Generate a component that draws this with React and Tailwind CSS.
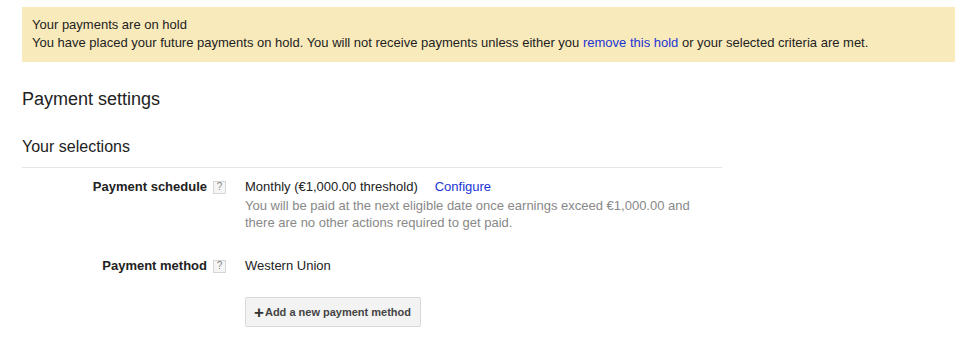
export default function App() {
  const help = (
    <span className="ml-[6px] inline-flex h-[13px] w-[13px] items-center justify-center border border-[#d6d6d6] bg-[#f5f5f5] text-[10px] leading-none text-[#888]">
      ?
    </span>
  );

  return (
    <div className="min-h-screen bg-white pt-[7px] font-['Liberation_Sans',Arial,sans-serif] text-[13px] text-[#222]">
      <div className="ml-[22px] bg-[#f9eabb] px-[10px] pb-[10px] pt-[9px] leading-[18px]">
        <div>Your payments are on hold</div>
        <div>
          You have placed your future payments on hold. You will not receive payments unless either you{' '}
          <a className="text-[#1a35d6]">remove this hold</a> or your selected criteria are met.
        </div>
      </div>

      <div className="ml-[22px] w-[700px]">
        <h1 className="mt-[26px] text-[18px] leading-[22px] text-[#222]">Payment settings</h1>
        <h2 className="mt-[27px] text-[16px] leading-[20px] text-[#222]">Your selections</h2>
        <div className="mt-[10px] border-t border-[#e5e5e5]" />

        <div className="mt-[10px] grid grid-cols-[204px_1fr] gap-x-[19px]">
          <div className="flex items-center justify-end self-start leading-[18px]">
            <span className="font-bold">Payment schedule</span>
            {help}
          </div>
          <div className="leading-[18px]">
            <div>
              Monthly (€1,000.00 threshold)
              <a className="ml-[17px] text-[#1a35d6]">Configure</a>
            </div>
            <div className="mt-[1px] w-[460px] leading-[17px] text-[#888]">
              You will be paid at the next eligible date once earnings exceed €1,000.00 and there are no other actions required to get paid.
            </div>
          </div>

          <div className="mt-[26px] flex items-center justify-end self-start leading-[18px]">
            <span className="font-bold">Payment method</span>
            {help}
          </div>
          <div className="mt-[26px] leading-[18px]">
            <div>Western Union</div>
            <button className="mt-[22px] flex h-[30px] items-center rounded-[2px] border border-[#d9d9d9] bg-[#f3f3f3] pl-[8px] pr-[9px] text-[11px] font-bold text-[#444]">
              <span className="mr-[1px] text-[17px] font-bold leading-none text-[#333]">+</span>
              Add a new payment method
            </button>
          </div>
        </div>
      </div>
    </div>
  );
}
